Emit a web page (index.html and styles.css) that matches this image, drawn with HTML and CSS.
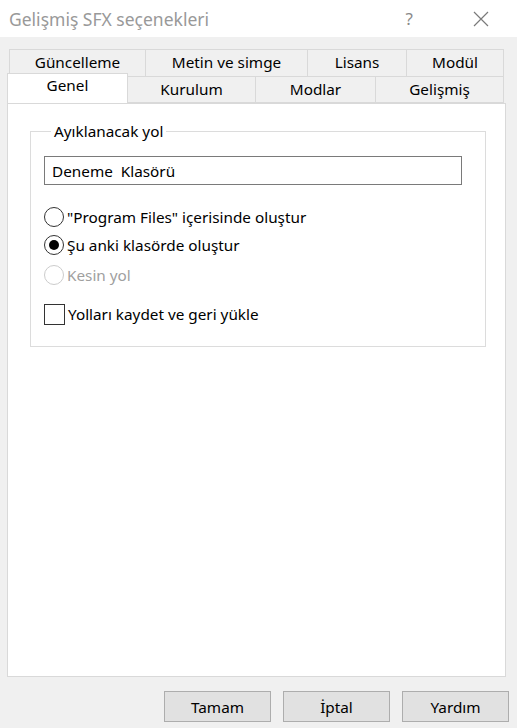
FILE: index.html
```html
<!DOCTYPE html>
<html lang="tr">
<head>
    <meta charset="UTF-8">
    <meta name="viewport" content="width=device-width, initial-scale=1.0">
    <title>Gelişmiş SFX seçenekleri</title>
    <link rel="stylesheet" href="styles.css">
</head>
<body>
    <div class="titlebar">
        <span class="title">Gelişmiş SFX seçenekleri</span>
        <span class="help">?</span>
        <svg class="close" width="16" height="16" viewBox="0 0 16 16">
            <path d="M1 1 L15 15 M15 1 L1 15" stroke="#7a7a7a" stroke-width="1.2" fill="none"/>
        </svg>
    </div>

    <div class="dialog">
        <div class="tabs">
            <div class="tab-row">
                <div class="tab w137">Güncelleme</div>
                <div class="tab w162">Metin ve simge</div>
                <div class="tab w99">Lisans</div>
                <div class="tab w97">Modül</div>
            </div>
            <div class="tab-row">
                <div class="tab active">Genel</div>
                <div class="tab w128">Kurulum</div>
                <div class="tab w120">Modlar</div>
                <div class="tab w128">Gelişmiş</div>
            </div>
        </div>

        <div class="panel">
            <fieldset class="group">
                <legend>Ayıklanacak yol</legend>
                <input type="text" class="path" value="Deneme  Klasörü">

                <label class="option">
                    <input type="radio" name="where">
                    "Program Files" içerisinde oluştur
                </label>
                <label class="option">
                    <input type="radio" name="where" checked>
                    Şu anki klasörde oluştur
                </label>
                <label class="option disabled">
                    <input type="radio" name="where" disabled>
                    Kesin yol
                </label>
                <label class="option check">
                    <input type="checkbox">
                    Yolları kaydet ve geri yükle
                </label>
            </fieldset>
        </div>

        <div class="buttons">
            <button type="button">Tamam</button>
            <button type="button">İptal</button>
            <button type="button">Yardım</button>
        </div>
    </div>
</body>
</html>
```

FILE: styles.css
```css
body {
    margin: 0;
    background-color: #f0f0f0;
    font-family: "Noto Sans", "Open Sans", sans-serif;
    font-size: 15.3px;
    color: #000;
}
.titlebar {
    display: flex;
    align-items: center;
    height: 37px;
    background-color: #fff;
    padding-left: 9px;
}
.title {
    flex: 1;
    font-size: 17.5px;
    color: #999;
}
.help {
    font-size: 17px;
    color: #8a8a8a;
    margin-right: 60px;
}
.close {
    margin-right: 28px;
}
.dialog {
    padding-top: 12px;
}
.tabs {
    margin-left: 9px;
    width: 495px;
}
.tab-row {
    display: flex;
}
.tab {
    box-sizing: border-box;
    text-align: center;
    border: 1px solid #d9d9d9;
    margin-left: -1px;
    background-color: #f0f0f0;
}
.tab:first-child {
    margin-left: 0;
}
.tab-row:first-child .tab {
    height: 28px;
    line-height: 25px;
}
.tab-row:last-child .tab {
    height: 26px;
    line-height: 24px;
    border-top: none;
}
.w137 { width: 137px; }
.w162 { width: 163px; }
.w99 { width: 100px; }
.w97 { width: 98px; }
.w128 { width: 129px; }
.w120 { width: 121px; }
.tab-row:last-child .tab.active {
    width: 121px;
    height: 30px;
    line-height: 22px;
    margin: -4px 0 -1px -2px;
    background-color: #fff;
    border: 1px solid #d9d9d9;
    border-bottom: none;
    z-index: 1;
}
.panel {
    box-sizing: border-box;
    margin-left: 7px;
    width: 499px;
    height: 574px;
    background-color: #fff;
    border: 1px solid #d9d9d9;
    padding-top: 17px;
}
.group {
    box-sizing: border-box;
    margin: 0 0 0 22px;
    width: 456px;
    height: 226px;
    border: 1px solid #dcdcdc;
    padding: 15px 0 0 13px;
}
.group legend {
    padding: 0 3px;
    margin-left: 7px;
    line-height: 20px;
}
.path {
    box-sizing: border-box;
    display: block;
    width: 418px;
    height: 29px;
    border: 1px solid #7a7a7a;
    padding: 0 7px;
    font-family: inherit;
    font-size: 15.3px;
    margin: 0 0 22px;
}
.option {
    display: flex;
    align-items: center;
    gap: 3px;
    height: 20px;
    margin-bottom: 8px;
}
.option + .option {
    margin-bottom: 10px;
}
.option.disabled {
    color: #a0a0a0;
    margin-bottom: 19px;
}
.option input {
    appearance: none;
    box-sizing: border-box;
    width: 20px;
    height: 20px;
    margin: 0;
    border: 1px solid #333;
    border-radius: 50%;
    background-color: #fff;
    display: flex;
    align-items: center;
    justify-content: center;
}
.option input:checked::after {
    content: "";
    width: 10px;
    height: 10px;
    border-radius: 50%;
    background-color: #000;
}
.option input:disabled {
    border-color: #cccccc;
}
.option.check input {
    border-radius: 0;
    width: 21px;
    height: 21px;
}
.buttons {
    display: flex;
    justify-content: flex-end;
    gap: 12px;
    padding: 14px 8px 0 0;
}
.buttons button {
    width: 107px;
    height: 31px;
    background-color: #e1e1e1;
    border: 1px solid #adadad;
    font-family: inherit;
    font-size: 15.3px;
    color: #000;
}
```
